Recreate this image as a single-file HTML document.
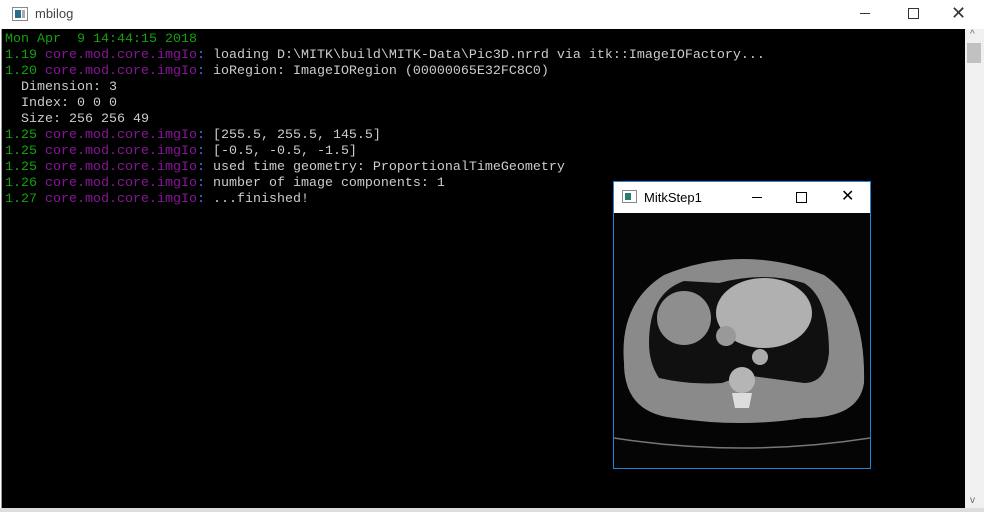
<!DOCTYPE html>
<html><head><style>
body{margin:0;width:984px;height:512px;overflow:hidden;background:#fff;font-family:"Liberation Sans",sans-serif;position:relative}
.tb{position:absolute;left:0;top:0;width:984px;height:29px;background:#fff}
.con{position:absolute;left:1px;top:29px;width:964px;height:479px;background:#000;border-left:1px solid #999}
.sb{position:absolute;left:965px;top:29px;width:19px;height:479px;background:#f0f0f0}
pre{margin:0;position:absolute;left:5px;top:32px;font-family:"Liberation Mono",monospace;font-size:13.33px;line-height:16px;color:#cccccc}
.g{color:#13a10e}.m{color:#881798}.b{color:#3b78ff}
.w{position:absolute;left:613px;top:181px;width:256px;height:286px;border:1px solid #1e84d8;background:#000}
.wt{height:31px;background:#fff;position:relative;font-size:13px}
</style></head><body>
<div class="tb">
<svg style="position:absolute;left:12px;top:7px" width="16" height="14"><rect x=".5" y=".5" width="15" height="13" fill="#fff" stroke="#888"/><rect x="3" y="3" width="6" height="8" fill="#2a6c8c"/><rect x="10" y="3" width="3" height="8" fill="#aaa"/></svg>
<span style="position:absolute;left:35px;top:6px;font-size:13px;color:#444">mbilog</span>
<span style="position:absolute;left:860px;top:13px;width:10px;height:1px;background:#333"></span>
<span style="position:absolute;left:908px;top:8px;width:9px;height:9px;border:1px solid #333"></span>
<span style="position:absolute;left:951px;top:3px;font-size:18px;color:#333">✕</span>
</div>
<div class="con"></div>
<div class="sb"><div style="position:absolute;left:2px;top:14px;width:14px;height:20px;background:#c1c1c1"></div>
<div style="position:absolute;left:5px;top:0;font-size:10px;color:#666">^</div>
<div style="position:absolute;left:5px;bottom:2px;font-size:10px;color:#666">v</div></div>
<div style="position:absolute;left:0;top:508px;width:984px;height:4px;background:#ddd"></div>
<pre><span class="g">Mon Apr  9 14:44:15 2018</span>
<span class="g">1.19</span> <span class="m">core.mod.core.imgIo</span><span class="b">:</span> loading D:\MITK\build\MITK-Data\Pic3D.nrrd via itk::ImageIOFactory...
<span class="g">1.20</span> <span class="m">core.mod.core.imgIo</span><span class="b">:</span> ioRegion: ImageIORegion (00000065E32FC8C0)
  Dimension: 3
  Index: 0 0 0
  Size: 256 256 49
<span class="g">1.25</span> <span class="m">core.mod.core.imgIo</span><span class="b">:</span> [255.5, 255.5, 145.5]
<span class="g">1.25</span> <span class="m">core.mod.core.imgIo</span><span class="b">:</span> [-0.5, -0.5, -1.5]
<span class="g">1.25</span> <span class="m">core.mod.core.imgIo</span><span class="b">:</span> used time geometry: ProportionalTimeGeometry
<span class="g">1.26</span> <span class="m">core.mod.core.imgIo</span><span class="b">:</span> number of image components: 1
<span class="g">1.27</span> <span class="m">core.mod.core.imgIo</span><span class="b">:</span> ...finished!</pre>
<div class="w">
<div class="wt">
<svg style="position:absolute;left:8px;top:8px" width="15" height="13"><rect x=".5" y=".5" width="14" height="12" fill="#fff" stroke="#888"/><rect x="3" y="3" width="6" height="7" fill="#2a7c6c"/></svg>
<span style="position:absolute;left:30px;top:8px;color:#000">MitkStep1</span>
<span style="position:absolute;left:138px;top:15px;width:10px;height:1px;background:#000"></span>
<span style="position:absolute;left:182px;top:10px;width:9px;height:9px;border:1px solid #000"></span>
<span style="position:absolute;left:227px;top:4px;font-size:16px">✕</span>
</div>
<svg width="256" height="255" style="display:block">
<rect width="256" height="255" fill="#050505"/>
<path d="M10 150 Q5 90 50 62 Q128 30 210 62 Q252 90 250 170 Q245 205 190 205 Q128 215 60 205 Q10 200 10 150Z" fill="#8a8a8a"/>
<path d="M35 130 Q35 80 70 68 L105 70 Q150 58 190 70 Q215 85 215 140 Q212 170 190 170 L130 162 L108 170 Q75 172 45 165 Q35 150 35 130Z" fill="#101010"/>
<circle cx="70" cy="105" r="27" fill="#8e8e8e"/>
<ellipse cx="150" cy="100" rx="48" ry="35" fill="#b0b0b0"/>
<circle cx="112" cy="123" r="10" fill="#999"/>
<circle cx="146" cy="144" r="8" fill="#aaa"/>
<circle cx="128" cy="167" r="13" fill="#b5b5b5"/>
<path d="M118 180 L138 180 L135 195 L121 195Z" fill="#ddd"/>
<path d="M0 225 Q128 245 256 225" stroke="#777" fill="none" stroke-width="1.5"/>
</svg>
</div>
</body></html>
